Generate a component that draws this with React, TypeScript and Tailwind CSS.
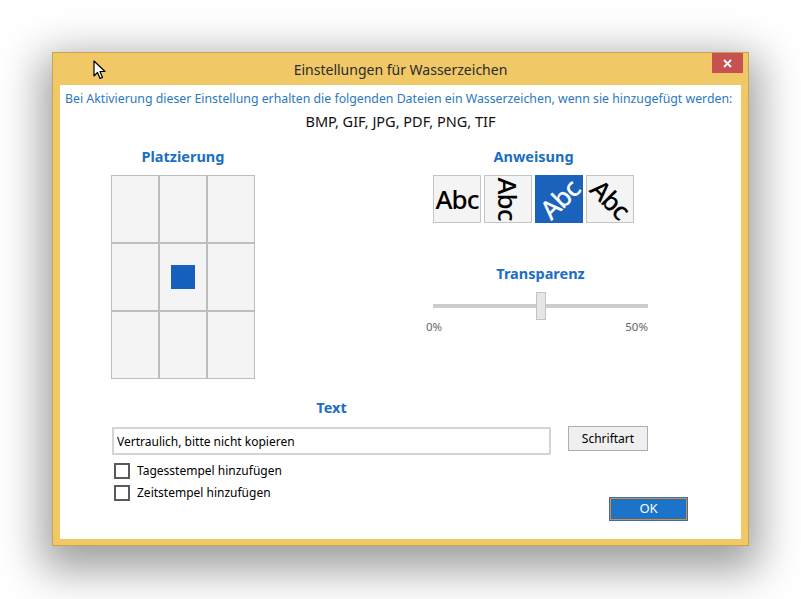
import { useState } from 'react'

const font = { fontFamily: '"Noto Sans", "Open Sans", sans-serif' }

function Cursor() {
  return (
    <svg className="absolute left-[93px] top-[60px]" width="14" height="20" viewBox="0 0 14 20">
      <path d="M1 1 L1 16 L4.5 12.5 L7 18.5 L9.5 17.5 L7 11.5 L12 11.5 Z" fill="#fff" stroke="#000" strokeWidth="1.2" strokeLinejoin="round" />
    </svg>
  )
}

export default function App() {
  const [cell, setCell] = useState(4)
  const [angle, setAngle] = useState(2)
  const [text, setText] = useState('Vertraulich, bitte nicht kopieren')
  const [day, setDay] = useState(false)
  const [time, setTime] = useState(false)

  const rotations = ['', 'rotate-90', '-rotate-45', 'rotate-45']

  return (
    <div className="relative w-[801px] h-[599px] bg-white overflow-hidden pl-[52px] pt-[52px]" style={font}>
      <div className="w-[697px] h-[494px] bg-[#f0c866] border border-[#c9a44c] shadow-[0_14px_40px_10px_rgba(0,0,0,0.38)] flex flex-col px-[7px] pb-[6px]">
        {/* title bar */}
        <div className="h-[32px] flex items-start relative">
          <div className="flex-1 text-center text-[14px] text-[#2b2b2b] pt-[6px]">Einstellungen für Wasserzeichen</div>
          <button className="absolute right-[-2px] top-0 w-[31px] h-[20px] bg-[#c75050] flex items-center justify-center">
            <svg width="9" height="9" viewBox="0 0 9 9">
              <path d="M1 1 L8 8 M8 1 L1 8" stroke="#fff" strokeWidth="1.8" />
            </svg>
          </button>
        </div>

        {/* client area */}
        <div className="flex-1 bg-white flex flex-col">
          <p className="text-[12.3px] text-[#2a78c2] pl-[5px] pt-[5px] leading-[17px] whitespace-nowrap">
            Bei Aktivierung dieser Einstellung erhalten die folgenden Dateien ein Wasserzeichen, wenn sie hinzugefügt werden:
          </p>
          <p className="text-center text-[14.5px] text-[#111] leading-[20px] mt-[4px]">BMP, GIF, JPG, PDF, PNG, TIF</p>

          <div className="flex mt-[15px] pl-[51px]">
            {/* Platzierung */}
            <div className="w-[144px] flex flex-col items-center">
              <h2 className="text-[14.5px] font-bold text-[#1b6ec2] leading-[20px]">Platzierung</h2>
              <div className="mt-[9px] grid grid-cols-3 grid-rows-3 gap-[2px] bg-[#bdbdbd] border border-[#bdbdbd] w-[144px] h-[204px]">
                {Array.from({ length: 9 }).map((_, i) => (
                  <button key={i} onClick={() => setCell(i)} className="bg-[#f4f4f4] flex items-center justify-center">
                    {cell === i && <span className="w-[24px] h-[24px] bg-[#1560bd]" />}
                  </button>
                ))}
              </div>
            </div>

            {/* Anweisung + Transparenz */}
            <div className="ml-[178px] w-[218px] flex flex-col">
              <div className="w-[201px] flex flex-col items-center">
                <h2 className="text-[14.5px] font-bold text-[#1b6ec2] leading-[20px]">Anweisung</h2>
                <div className="mt-[9px] flex gap-[3px]">
                  {rotations.map((r, i) => (
                    <button
                      key={i}
                      onClick={() => setAngle(i)}
                      className={`w-[48px] h-[48px] border overflow-hidden flex items-center justify-center ${angle === i ? 'bg-[#1a62bb] border-[#1a62bb] text-white' : 'bg-[#f4f4f4] border-[#c4c4c4] text-black'}`}
                    >
                      <span className={`block text-[26px] font-medium leading-none tracking-[-1px] ${r}`}>Abc</span>
                    </button>
                  ))}
                </div>
              </div>

              <div className="mt-[40px] w-[215px] flex flex-col items-center">
                <h2 className="text-[14.5px] font-bold text-[#1b6ec2] leading-[20px]">Transparenz</h2>
                <div className="relative w-full h-[28px] mt-[9px] flex items-center">
                  <div className="w-full h-[4px] bg-[#cdcdcd]" />
                  <div className="absolute left-[103px] top-0 w-[10px] h-[28px] bg-[#e6e6e6] border border-[#c3c3c3]" />
                </div>
                <div className="w-[222px] -ml-[7px] flex justify-between text-[11.5px] text-[#666] leading-[14px]">
                  <span>0%</span>
                  <span>50%</span>
                </div>
              </div>
            </div>
          </div>

          {/* Text */}
          <div className="pl-[52px] mt-[18px] flex flex-col">
            <h2 className="w-[439px] text-center text-[14.5px] font-bold text-[#1b6ec2] leading-[20px]">Text</h2>
            <div className="mt-[10px] flex items-start gap-[17px]">
              <input
                value={text}
                onChange={(e) => setText(e.target.value)}
                className="w-[439px] h-[28px] border-2 border-[#d4d4d4] px-[3px] text-[12px] text-black outline-none"
              />
              <button className="w-[80px] h-[25px] -mt-[1px] bg-[#efefef] border border-[#adadad] text-[12px] text-black">Schriftart</button>
            </div>
            <div className="mt-[8px] flex flex-col gap-[6px] pl-[2px]">
              <label className="flex items-center gap-[7px] text-[12px] text-black leading-[16px]">
                <input type="checkbox" checked={day} onChange={() => setDay(!day)} className="appearance-none w-[16px] h-[16px] border-2 border-[#5a5a5a] bg-white" />
                Tagesstempel hinzufügen
              </label>
              <label className="flex items-center gap-[7px] text-[12px] text-black leading-[16px]">
                <input type="checkbox" checked={time} onChange={() => setTime(!time)} className="appearance-none w-[16px] h-[16px] border-2 border-[#5a5a5a] bg-white" />
                Zeitstempel hinzufügen
              </label>
            </div>
          </div>

          <div className="flex justify-end pr-[53px] -mt-[4px]">
            <button className="w-[79px] h-[24px] bg-[#1b74c9] border border-[#3c6f9e] ring-1 ring-inset ring-[#d98a3a] text-white text-[13px]">OK</button>
          </div>
        </div>
      </div>
      <Cursor />
    </div>
  )
}
